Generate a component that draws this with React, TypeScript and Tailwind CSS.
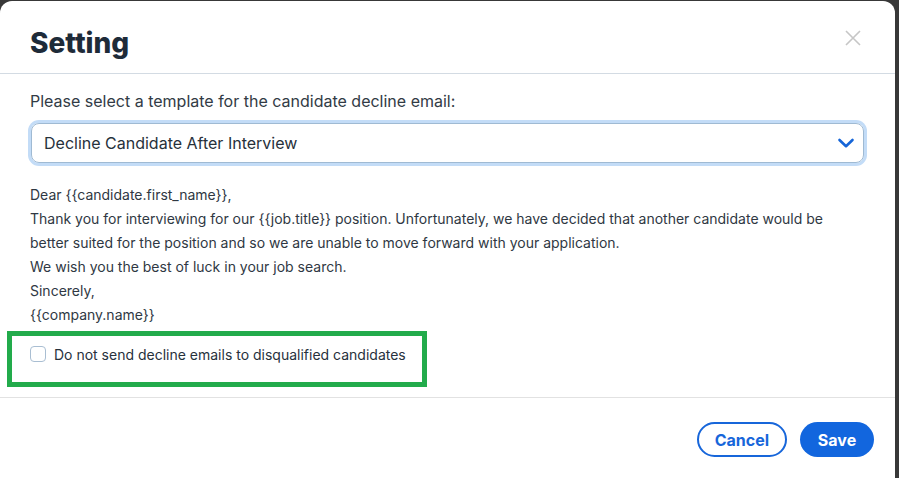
import React, { useState } from 'react';

const template = 'Decline Candidate After Interview';

const letter = [
  'Dear {{candidate.first_name}},',
  'Thank you for interviewing for our {{job.title}} position. Unfortunately, we have decided that another candidate would be better suited for the position and so we are unable to move forward with your application.',
  'We wish you the best of luck in your job search.',
  'Sincerely,',
  '{{company.name}}',
];

export default function App() {
  const [skipDisqualified, setSkipDisqualified] = useState(false);

  return (
    <div className="w-[899px] h-[478px] bg-[#383838] pt-[1px] pr-[4px] overflow-hidden" style={{ fontFamily: 'Inter, "Noto Sans", sans-serif' }}>
      <div className="h-full bg-white rounded-t-[12px] flex flex-col">
        {/* Header */}
        <div className="flex justify-between items-start px-[30px] pt-[24px] pb-[12px] border-b border-[#d3dbe3]">
          <h2 className="text-[28px] leading-[36px] font-extrabold text-[#1e2b39]">Setting</h2>
          <button className="mt-[5px] mr-[4px] text-[#c6c6c6]" title="Close">
            <svg width="16" height="16" viewBox="0 0 16 16" fill="none" stroke="currentColor" strokeWidth="1.6">
              <path d="M1 1L15 15M15 1L1 15" />
            </svg>
          </button>
        </div>

        {/* Body */}
        <div className="px-[30px] pt-[15px]">
          <p className="text-[16px] leading-[24px] text-[#323b45]">Please select a template for the candidate decline email:</p>
          <div className="mt-[10px] mx-[1px] h-[40px] flex items-center justify-between pl-[12px] pr-[8px] rounded-[8px] border border-[#9fbad3] ring-[3px] ring-[#c3dcf7]">
            <span className="text-[16px] text-[#27313b]">{template}</span>
            <svg width="18" height="18" viewBox="0 0 18 18" fill="none" stroke="#1565d8" strokeWidth="2.6" strokeLinecap="round" strokeLinejoin="round">
              <path d="M2.5 6L9 12.2L15.5 6" />
            </svg>
          </div>

          <div className="mt-[20px] text-[14px] leading-[24px] text-[#2f3843]">
            {letter.map(line => (
              <p key={line}>{line}</p>
            ))}
          </div>

          <div className="mt-[4px] -ml-[23px] w-[420px] border-[5px] border-[#22ab4b] pl-[18px] pt-[10px] pb-[20px]">
            <label className="flex items-center gap-[8px] h-[16px] cursor-pointer">
              <input
                type="checkbox"
                checked={skipDisqualified}
                onChange={e => setSkipDisqualified(e.target.checked)}
                className="appearance-none w-[16px] h-[16px] rounded-[4px] border border-[#a9bed2] bg-white shrink-0"
              />
              <span className="text-[14px] text-[#27313c]">Do not send decline emails to disqualified candidates</span>
            </label>
          </div>
        </div>

        {/* Footer */}
        <div className="mt-[10px] border-t border-[#e2e2e2] flex justify-end gap-[13px] pt-[24px] pr-[21px]">
          <button className="h-[35px] px-[16px] rounded-full border-2 border-[#1766da] text-[#1766da] text-[16px] font-bold">Cancel</button>
          <button className="h-[35px] w-[74px] rounded-full bg-[#1266de] text-white text-[16px] font-bold">Save</button>
        </div>
      </div>
    </div>
  );
}
